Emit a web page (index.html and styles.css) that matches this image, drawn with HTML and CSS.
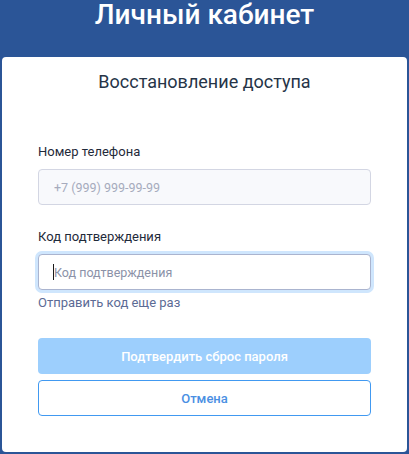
FILE: index.html
```html
<!DOCTYPE html>
<html lang="ru">
<head>
    <meta charset="UTF-8">
    <meta name="viewport" content="width=device-width, initial-scale=1.0">
    <title>Личный кабинет</title>
    <link rel="stylesheet" href="styles.css">
</head>
<body>
    <!-- шапка -->
    <header class="page-header">
        <h1>Личный кабинет</h1>
    </header>

    <!-- форма восстановления -->
    <div class="card">
        <h2 class="card-title">Восстановление доступа</h2>

        <div class="field">
            <label class="field-label">Номер телефона</label>
            <input class="field-input is-disabled" type="text" placeholder="+7 (999) 999-99-99" disabled>
        </div>

        <div class="field field-code">
            <label class="field-label">Код подтверждения</label>
            <div class="input-wrap">
                <input class="field-input is-focused" type="text" placeholder="Код подтверждения">
                <span class="caret"></span>
            </div>
        </div>

        <a class="resend-link" href="#">Отправить код еще раз</a>

        <div class="actions">
            <button class="btn btn-primary" disabled>Подтвердить сброс пароля</button>
            <button class="btn btn-outline">Отмена</button>
        </div>
    </div>
</body>
</html>
```

FILE: styles.css
```css
* {
    box-sizing: border-box;
}

body {
    margin: 0;
    background: #2b5597;
    font-family: Roboto, "Noto Sans", sans-serif;
}

.page-header {
    height: 57px;
    padding-top: 1px;
    text-align: center;
}

.page-header h1 {
    margin: 0;
    color: #ffffff;
    font-size: 28px;
    font-weight: 500;
    line-height: 28px;
}

.card {
    margin: 0 2px;
    background: #ffffff;
    border-radius: 4px;
    padding: 14px 36px 36px;
}

.card-title {
    margin: 0 0 49px;
    text-align: center;
    color: #263447;
    font-size: 18px;
    font-weight: 400;
    line-height: 22px;
}

.field-label {
    display: block;
    color: #1f2a3a;
    font-size: 13px;
    line-height: 20px;
    margin-bottom: 7px;
}

.input-wrap {
    position: relative;
}

.field-input {
    display: block;
    width: 100%;
    height: 36px;
    padding: 0 14px 0 15px;
    border: 1px solid #d3d6e3;
    border-radius: 4px;
    font-family: inherit;
    font-size: 12.5px;
    color: #333;
    background: #ffffff;
    outline: none;
}

.field-input::placeholder {
    color: #a6abbd;
}

.field-input.is-disabled {
    background: #f8f9fc;
}

.field-input.is-focused {
    border-color: #aab4cf;
    box-shadow: 0 0 0 3px #cfe6fd;
}

.field-input.is-focused::placeholder {
    color: #8b92a8;
}

.caret {
    position: absolute;
    left: 15px;
    top: 10px;
    width: 1px;
    height: 16px;
    background: #1a1a1a;
}

.field-code {
    margin-top: 22px;
}

.resend-link {
    display: block;
    margin-top: 3px;
    color: #5c6b95;
    font-size: 13px;
    line-height: 20px;
    text-decoration: none;
}

.actions {
    margin-top: 25px;
    display: flex;
    flex-direction: column;
    gap: 6px;
}

.btn {
    height: 36px;
    border-radius: 4px;
    font-family: inherit;
    font-size: 13px;
    font-weight: 500;
    cursor: pointer;
}

.btn-primary {
    background: #9dcffd;
    border: none;
    color: #ffffff;
}

.btn-outline {
    background: #ffffff;
    border: 1px solid #4199f1;
    color: #4a8fe3;
}
```
